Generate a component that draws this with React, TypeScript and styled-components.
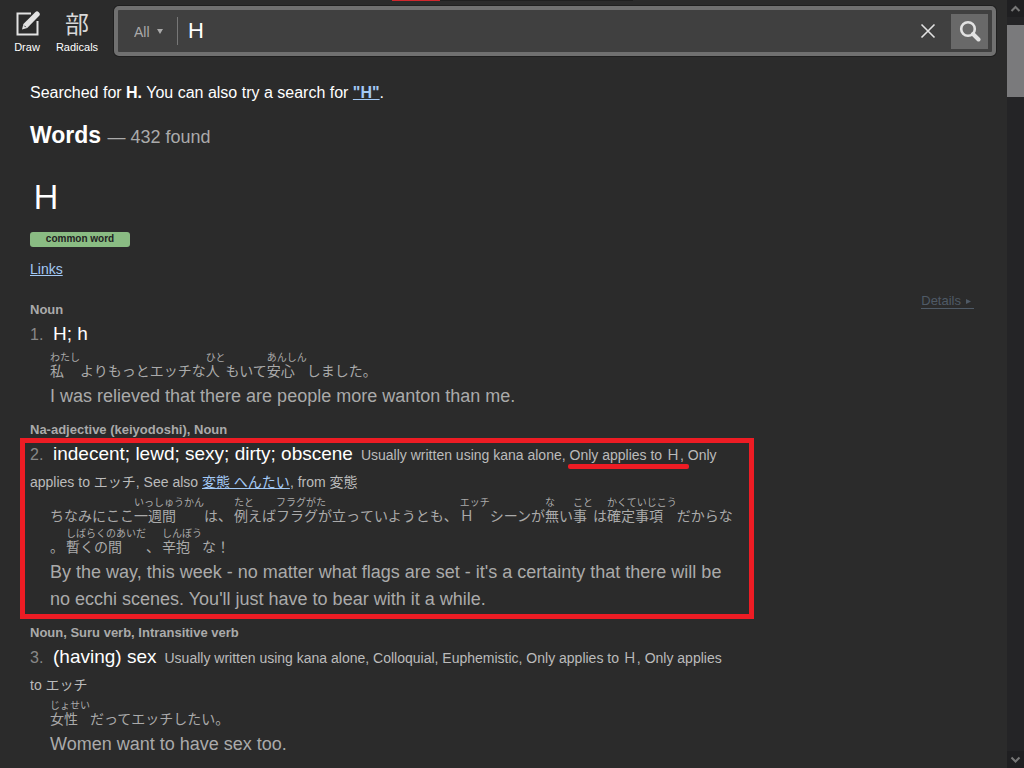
import React from "react";
import styled, { createGlobalStyle } from "styled-components";

const GlobalStyle = createGlobalStyle`
  * { box-sizing: border-box; }
  body {
    margin: 0;
    background: #2b2b2b;
    color: #fff;
    font-family: "Liberation Sans", "Noto Sans CJK JP", sans-serif;
  }
  button, input, select { font-family: inherit; }
`;

const Page = styled.div`
  position: relative;
  display: grid;
  grid-template-columns: minmax(0, 1fr) 17px;
  min-height: 100vh;
`;

const TabEdge = styled.div`
  position: absolute;
  top: 0;
  left: 392px;
  width: 241px;
  height: 1px;
  background: #1f1f1f;
  &::before {
    content: "";
    display: block;
    width: 48px;
    height: 1px;
    background: #d0272d;
  }
`;

const Header = styled.header`
  display: flex;
  align-items: flex-start;
  padding: 6px 11px 0 7px;
`;

const ToolButton = styled.button<{ $wide?: boolean }>`
  display: flex;
  flex-direction: column;
  align-items: center;
  flex: none;
  width: ${(p) => (p.$wide ? "60px" : "40px")};
  padding: 4px 0 0;
  border: 0;
  background: none;
  color: #fff;
  font-size: 11px;
  line-height: 14px;
`;

const ToolIcon = styled.span`
  display: flex;
  align-items: center;
  justify-content: center;
  height: 26px;
  margin-bottom: 4px;
  color: #d8d8d8;
  font: 400 24px/26px "Noto Sans CJK JP", sans-serif;
`;

const SearchForm = styled.form`
  display: flex;
  align-items: center;
  flex: 1;
  min-width: 0;
  height: 50px;
  margin-left: 7px;
  padding: 0 4px 0 12px;
  border: 4px solid #707070;
  border-radius: 5px;
  background: #404040;
  box-shadow: 0 0 0 1px #1f1f1f;
`;

const ScopeWrap = styled.div`
  display: flex;
  align-items: center;
  height: 28px;
  width: 48px;
  border-right: 1px solid #777;
  color: #aaa;
  svg { margin-left: -21px; pointer-events: none; }
`;

const Scope = styled.select`
  appearance: none;
  width: 48px;
  padding: 2px 0 0 4px;
  border: 0;
  background: none;
  color: #aaa;
  font-size: 14px;
  line-height: 20px;
`;

const Query = styled.input`
  flex: 1;
  min-width: 0;
  padding: 0 0 0 10px;
  border: 0;
  outline: 0;
  background: none;
  color: #fff;
  font-size: 22px;
  line-height: 28px;
`;

const ClearButton = styled.button`
  display: flex;
  padding: 0;
  margin-right: 15px;
  border: 0;
  background: none;
`;

const SubmitButton = styled.button`
  display: flex;
  align-items: center;
  justify-content: center;
  width: 37px;
  height: 35px;
  padding: 0;
  border: 0;
  background: #696969;
`;

const Main = styled.main`
  padding: 27px 33px 0 30px;
`;

const Notice = styled.p`
  margin: 0;
  font-size: 16px;
  line-height: 20px;
`;

const Link = styled.a`
  color: #a3c9f5;
`;

const Heading = styled.h1`
  margin: 18px 0 0;
  font-size: 23px;
  line-height: 28px;
  small {
    color: #aaa;
    font-size: 18px;
    font-weight: 400;
  }
`;

const Headword = styled.div`
  margin-top: 24px;
  font: 400 32px/40px "Noto Sans CJK JP", sans-serif;
`;

const Badge = styled.span`
  display: block;
  width: 100px;
  height: 15px;
  margin-top: 17px;
  border-radius: 3px;
  background: #8abc83;
  color: #222;
  font-size: 10px;
  font-weight: 700;
  line-height: 14px;
  text-align: center;
`;

const LinksRow = styled.div`
  margin-top: 12px;
  font-size: 14px;
  line-height: 20px;
`;

const Entry = styled.div`
  display: flex;
  justify-content: space-between;
  align-items: flex-start;
  margin-top: 20px;
`;

const Senses = styled.div`
  width: 75%;
`;

const Details = styled.a`
  display: flex;
  align-items: center;
  gap: 5px;
  margin-top: -5px;
  padding-right: 2px;
  border-bottom: 1px solid #4f5a66;
  color: #4f5a66;
  font-size: 13px;
  line-height: 14px;
  text-decoration: none;
`;

const Sense = styled.section`
  position: relative;
  margin-bottom: 9px;
`;

const Tags = styled.div`
  color: #aaa;
  font-size: 13px;
  font-weight: 700;
  line-height: 22px;
  padding-bottom: 1px;
`;

const Meaning = styled.div`
  min-height: 29px;
  padding-right: 4px;
  color: #bbb;
  font-size: 14px;
  line-height: 27px;
`;

const Num = styled.span`
  display: inline-block;
  width: 23px;
  color: #888;
  font-size: 16px;
  line-height: 20px;
`;

const Gloss = styled.span`
  margin-right: 8px;
  color: #fff;
  font-size: 19px;
  line-height: 20px;
`;

const Marked = styled.span`
  position: relative;
  &::after {
    content: "";
    position: absolute;
    left: -2px;
    right: -5px;
    bottom: -6px;
    height: 5px;
    border-radius: 2px;
    background: #ed1c24;
  }
`;

const RedBox = styled.div`
  position: absolute;
  top: 19px;
  bottom: -6px;
  left: -10px;
  right: -16px;
  border: 5px solid #ed1c24;
  pointer-events: none;
`;

const Sentence = styled.ul`
  display: flex;
  flex-wrap: wrap;
  align-items: flex-end;
  row-gap: 4px;
  margin: 0 0 0 20px;
  padding: 0;
  list-style: none;
  color: #aaa;
  font: 14px/16px "Noto Sans CJK JP", sans-serif;
`;

const Piece = styled.li<{ $stop?: boolean }>`
  padding-right: ${(p) => (p.$stop ? "2px" : "0")};
`;

const Furigana = styled.span`
  display: block;
  font-size: 10px;
  line-height: 11px;
`;

const English = styled.p`
  margin: 5px 0 0 20px;
  color: #aaa;
  font-size: 18px;
  line-height: 27px;
`;

const ScrollRail = styled.div`
  position: sticky;
  top: 0;
  display: flex;
  flex-direction: column;
  height: 100vh;
  background: #242426;
`;

const RailButton = styled.button`
  display: flex;
  align-items: center;
  justify-content: center;
  height: 17px;
  padding: 0;
  border: 0;
  background: #1f1f21;
`;

const Thumb = styled.div`
  height: 72px;
  margin: 8px 0 auto;
  background: #7a7a7c;
`;

type Part = [string, string?];

function Japanese({ parts }: { parts: Part[] }) {
  return (
    <Sentence lang="ja">
      {parts.map(([text, reading], i) => (
        <Piece key={i} $stop={text === "、" || text === "。"}>
          {reading && <Furigana>{reading}</Furigana>}
          {text}
        </Piece>
      ))}
    </Sentence>
  );
}

const first: Part[] = [
  ["私", "わたし"], ["よりもっと"], ["エッチな"], ["人", "ひと"], ["もいて"],
  ["安心", "あんしん"], ["しました"], ["。"],
];

const second: Part[] = [
  ["ちなみに"], ["ここ"], ["一週間", "いっしゅうかん"], ["は"], ["、"],
  ["例え", "たと"], ["ば"], ["フラグが立っ", "フラグがた"], ["ていよう"], ["とも"], ["、"],
  ["Ｈ", "エッチ"], ["シーンが"], ["無い", "な"], ["事", "こと"], ["は"],
  ["確定事項", "かくていじこう"], ["だからな"], ["。"],
  ["暫くの間", "しばらくのあいだ"], ["、"], ["辛抱", "しんぼう"], ["な！"],
];

const third: Part[] = [
  ["女性", "じょせい"], ["だって"], ["エッチ"], ["したい"], ["。"],
];

function Chevron({ down }: { down?: boolean }) {
  return (
    <svg width="11" height="8" viewBox="0 0 11 8" fill="none" stroke="#777" strokeWidth="2">
      <path d={down ? "M1.5 1.5 5.5 5.5 9.5 1.5" : "M1.5 6 5.5 2 9.5 6"} />
    </svg>
  );
}

export default function App() {
  return (
    <Page>
      <GlobalStyle />
      <div>
        <Header>
          <ToolButton type="button">
            <ToolIcon>
              <svg width="26" height="26" viewBox="0 0 26 26">
                <path d="M17 3.5H3.5v21h20V11" fill="none" stroke="#e2e2e2" strokeWidth="2" />
                <path d="M8 19.5 9.4 14.1 21.2 2.2Q23 .6 24.5 2L25.2 2.7Q26.6 4.2 25.2 5.8L13.2 18Z" fill="#e2e2e2" />
                <path d="M10.3 15.7 11.8 17.2" stroke="#2b2b2b" strokeWidth="1" />
              </svg>
            </ToolIcon>
            Draw
          </ToolButton>
          <ToolButton type="button" $wide>
            <ToolIcon lang="ja">部</ToolIcon>
            Radicals
          </ToolButton>
          <SearchForm onSubmit={(e) => e.preventDefault()}>
            <ScopeWrap>
              <Scope aria-label="Search scope">
                <option>All</option>
              </Scope>
              <svg width="6" height="5" viewBox="0 0 6 5"><path d="M0 0h6L3 5z" fill="#aaa" /></svg>
            </ScopeWrap>
            <Query aria-label="Search" defaultValue="H" />
            <ClearButton type="button" aria-label="Clear">
              <svg width="16" height="16" viewBox="0 0 16 16" stroke="#e2e2e2" strokeWidth="1.6">
                <path d="M1.5 1.5 14.5 14.5M14.5 1.5 1.5 14.5" />
              </svg>
            </ClearButton>
            <SubmitButton type="submit" aria-label="Submit search">
              <svg width="22" height="22" viewBox="0 0 22 22" fill="none" stroke="#e2e2e2">
                <circle cx="9" cy="9" r="6.8" strokeWidth="2.6" />
                <path d="M14 14 19.5 19.5" strokeWidth="4" strokeLinecap="round" />
              </svg>
            </SubmitButton>
          </SearchForm>
        </Header>
        <Main>
          <Notice>
            Searched for <b>H.</b> You can also try a search for <Link href="#h"><b>"H"</b></Link>.
          </Notice>
          <Heading>Words <small>— 432 found</small></Heading>
          <Headword lang="ja">Ｈ</Headword>
          <Badge>common word</Badge>
          <LinksRow><Link href="#links">Links</Link></LinksRow>
          <Entry>
            <Senses>
              <Sense>
                <Tags>Noun</Tags>
                <Meaning><Num>1.</Num><Gloss>H; h</Gloss></Meaning>
                <Japanese parts={first} />
                <English>I was relieved that there are people more wanton than me.</English>
              </Sense>
              <Sense>
                <Tags>Na-adjective (keiyodoshi), Noun</Tags>
                <Meaning>
                  <Num>2.</Num><Gloss>indecent; lewd; sexy; dirty; obscene</Gloss>
                  Usually written using kana alone, <Marked>Only applies to Ｈ,</Marked> Only
                  applies to エッチ, See also <Link href="#hentai">変態 へんたい</Link>, from 変態
                </Meaning>
                <Japanese parts={second} />
                <English>
                  By the way, this week - no matter what flags are set - it's a certainty that
                  there will be no ecchi scenes. You'll just have to bear with it a while.
                </English>
                <RedBox />
              </Sense>
              <Sense>
                <Tags>Noun, Suru verb, Intransitive verb</Tags>
                <Meaning>
                  <Num>3.</Num><Gloss>(having) sex</Gloss>
                  Usually written using kana alone, Colloquial, Euphemistic, Only applies to Ｈ,
                  Only applies to エッチ
                </Meaning>
                <Japanese parts={third} />
                <English>Women want to have sex too.</English>
              </Sense>
            </Senses>
            <Details href="#details">
              Details
              <svg width="6" height="5" viewBox="0 0 6 5"><path d="M0 0 5 2.5 0 5z" fill="#4f5a66" /></svg>
            </Details>
          </Entry>
        </Main>
      </div>
      <ScrollRail>
        <RailButton type="button" aria-label="Scroll up"><Chevron /></RailButton>
        <Thumb />
        <RailButton type="button" aria-label="Scroll down"><Chevron down /></RailButton>
      </ScrollRail>
      <TabEdge />
    </Page>
  );
}
